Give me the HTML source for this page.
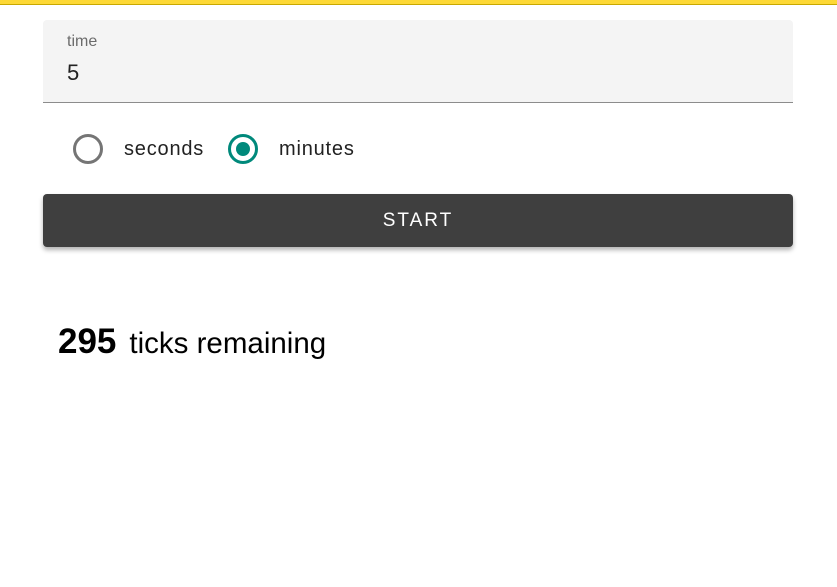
<!DOCTYPE html>
<html><head><style>
body{margin:0;width:837px;height:587px;background:#fff;font-family:"Liberation Sans",sans-serif;position:relative;overflow:hidden}
.top{position:absolute;left:0;top:0;width:837px;height:4px;background:#fdd835;border-bottom:1px solid #c8a800}
.field{position:absolute;left:43px;top:20px;width:750px;height:82px;background:#f4f4f4;border-radius:4px 4px 0 0;border-bottom:1px solid #8c8c8c}
.lbl{position:absolute;left:24px;top:13px;font-size:16px;color:#6b6b6b}
.val{position:absolute;left:24px;top:40px;font-size:22px;color:#222}
.r{position:absolute;top:134px;width:30px;height:30px;border:3px solid #757575;border-radius:50%;box-sizing:border-box}
.r.on{border-color:#00897b}
.r.on::after{content:"";position:absolute;left:5px;top:5px;width:14px;height:14px;border-radius:50%;background:#00897b}
.t{position:absolute;top:138px;font-size:20px;color:#222;letter-spacing:.8px}
.btn{position:absolute;left:43px;top:194px;width:750px;height:53px;background:#3f3f3f;border-radius:4px;box-shadow:0 3px 5px rgba(0,0,0,.3);color:#fff;font-size:19px;letter-spacing:2px;text-align:center;line-height:53px}
.cnt{position:absolute;left:58px;top:322px;font-size:29.5px;color:#000;white-space:nowrap}
</style></head><body>
<div class="top"></div>
<div class="field"><div class="lbl">time</div><div class="val">5</div></div>
<div class="r" style="left:73px"></div><div class="t" style="left:124px">seconds</div>
<div class="r on" style="left:228px"></div><div class="t" style="left:279px">minutes</div>
<div class="btn">START</div>
<div class="cnt"><b style="font-size:35px;margin-right:13px">295</b>ticks remaining</div>
</body></html>
